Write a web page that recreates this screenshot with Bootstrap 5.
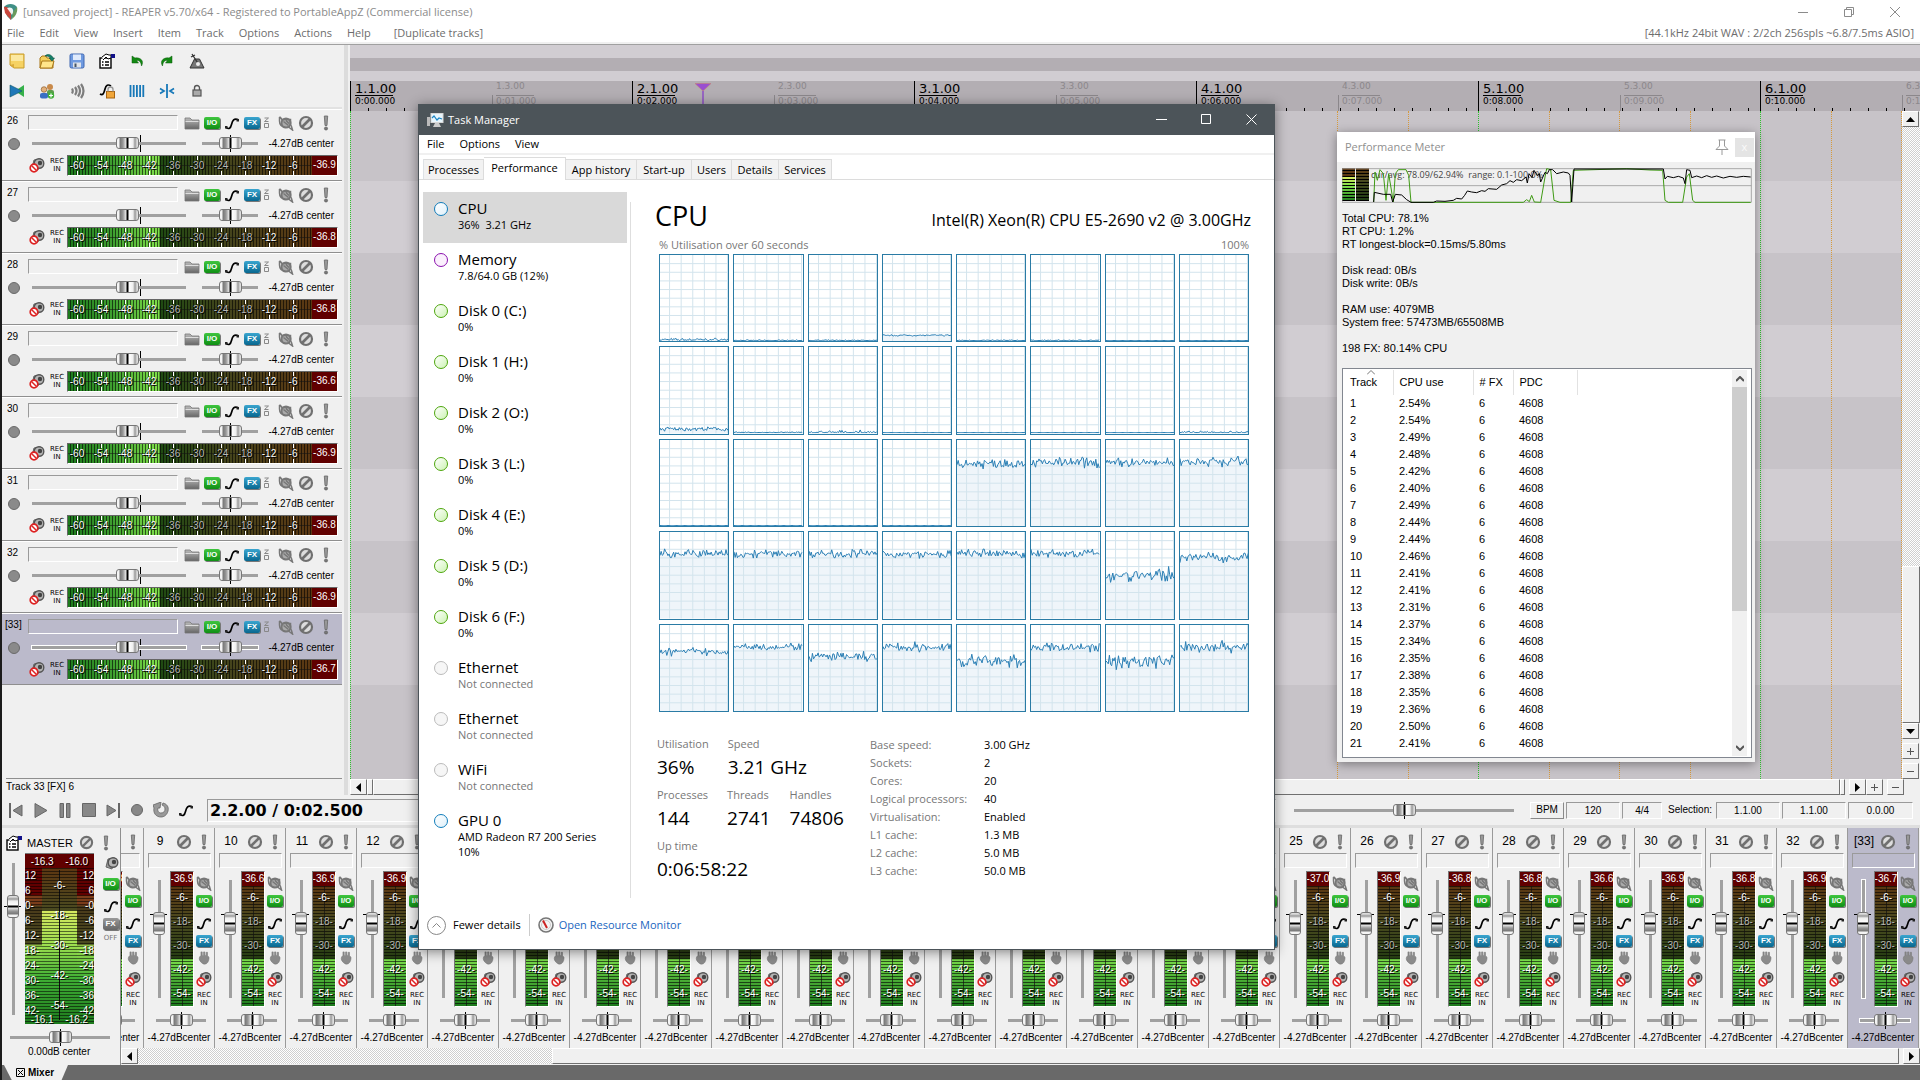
<!DOCTYPE html>
<html lang="en">
<head>
<meta charset="utf-8">
<meta name="viewport" content="width=device-width, initial-scale=1">
<title>REAPER</title>
<link href="https://cdn.jsdelivr.net/npm/bootstrap@5.3.0/dist/css/bootstrap.min.css" rel="stylesheet">
<style>
  body{background:#f0f0f0;border-left:2px solid #1b1b1b;overflow:hidden;color:#000;font:12px/16px "Open Sans","Noto Sans",sans-serif}
  button{background:none;border:0;padding:0;color:inherit;display:inline-flex;align-items:center;justify-content:center}
  input{min-width:0}
  svg{display:block;flex:none}
  .ui-arial{font-family:"Liberation Sans",Arial,sans-serif}
  .ic16{width:16px;height:16px}
  /* host window */
  .app-title{height:24px;padding-left:1px;color:#8b8b8b;font-size:11px}
  .app-title .win-btns{gap:36px;margin-right:20px}
  .app-menu{height:17px;padding:0 6px 0 5px;gap:15px;color:#6d6d6d;font-size:11px}
  .app-menu a,.tm-menu a{color:inherit;text-decoration:none}
  .app-head{background:#fff;border-bottom:1px solid #fff}
  .head-line{height:3px;border-bottom:1px solid #a0a0a0}
  /* track panel */
  .tcp{width:340px}
  .tool-row{height:30px;padding:2px 0 0 7px;gap:14px}
  .tools{height:64px;border-bottom:2px solid #e2e2e2}
  .trk{height:72px;border-bottom:1px solid #8f8f8f;border-top:1px solid #fff;font-size:10px;line-height:12px}
  .trk.sel{background:#bbbacb}
  .trk-top{height:25px;padding-left:5px}
  .trk-num{width:21px;margin-top:-4px}
  .trk.sel .trk-num{margin-left:-2px;width:23px}
  .name-box{background:transparent;border:1px solid;border-color:#9a9a9a #fff #fff #9a9a9a;height:15px;padding:0 2px;font-size:10px}
  .trk .name-box{width:150px;margin:-1px 6px 0 0}
  .trk-mid{height:17px;padding-left:6px}
  .trk-bot{height:23px;padding:3px 4px 0 27px}
  .dot{width:12px;height:12px;border-radius:50%;background:#8a8a8a;border:1px solid #6a6a6a}
  .tag{width:16px;height:12px;border-radius:2px;font:bold 8px/12px "Liberation Sans",sans-serif;color:#fff;box-shadow:1px 1px 0 #777}
  .tag-io{background:linear-gradient(#3fc53f,#0f8f14)}
  .tag-fx{background:linear-gradient(#3aa5cf,#08678f)}
  .tag-off{background:linear-gradient(#999,#666)}
  .recin{font:7px/8px "DejaVu Sans",sans-serif;text-align:center;width:16px}
  .off-lab{font:7px/8px "DejaVu Sans",sans-serif;color:#777}
  /* sliders */
  input[type=range]{-webkit-appearance:none;appearance:none;background:transparent;height:18px;margin:0;padding:0;display:block;flex:none}
  input[type=range]::-webkit-slider-runnable-track{height:3px;background:#a0a0a0}
  .sel input[type=range]::-webkit-slider-runnable-track{box-shadow:0 0 0 1px #fff}
  input[type=range]::-webkit-slider-thumb{-webkit-appearance:none;width:23px;height:12px;margin-top:-5px;border:1px solid #777;border-radius:3px;background:linear-gradient(90deg,#f4f4f4 0 2px,#777 3px,#999 6px,#e8e8e8 9px,#000 10px 11px,#fff 12px,#eee 16px,#999 18px,#ddd 20px)}
  .tick{background:linear-gradient(#000,#000) 50% 50%/1px 17px no-repeat}
  .tick-vol{background:linear-gradient(#000,#000) 108px 50%/1px 17px no-repeat}
  .fader{width:17px;background:linear-gradient(#000,#000) 50% 34px/17px 1px no-repeat}
  .fader input{transform:rotate(-90deg)}
  /* horizontal meter */
  .hmeter{width:271px;height:21px;border:1px solid;border-color:#666 #fff #fff #666;overflow:hidden;color:#fff;
    background:linear-gradient(#1118,#1118) 0 50%/244px 1px no-repeat,
      repeating-linear-gradient(90deg,transparent 0 2px,#0009 2px 3px),
      linear-gradient(90deg,#1d7a1d,#3fa030 45px,#7fe04a 91px,#1f4a12 92px,#44441c 160px,#5c3712 245px)}
  .hmeter span{width:24px;flex:none;text-align:center;text-shadow:1px 1px 0 #000,-1px 0 0 #0008;line-height:19px;background:linear-gradient(#fff,#fff) 12px 0/1px 4px no-repeat,linear-gradient(#fff,#fff) 12px 100%/1px 4px no-repeat}
  .hmeter span.dim{color:#b9b9b9}
  .hmeter b{font-weight:400;flex:none;width:25px;background:#610000;line-height:18px;text-align:center}
  .tcp-status{border-top:1px solid #8f8f8f;height:17px;margin-left:4px;font-size:10px;line-height:16px}
  .splitter{width:4px;margin:0 2px 0 2px;background:#dcdcdc}
  /* arrange */
  .band-a{height:13px;background:#d1cdd2}.band-b{height:13px;background:#b3aeb3}.band-c{height:10px;background:#d1cdd2}
  .ruler{height:30px;background:#b3aeb3;overflow:hidden;font:9px/10px "DejaVu Sans",sans-serif}
  .measure{width:282px;flex:none;background:repeating-linear-gradient(90deg,#000 0 1px,transparent 1px 18px) 0 100%/100% 3px no-repeat}
  .half{width:141px;padding-left:4px;border-left:1px solid #000;line-height:11px}
  .half.minor{border-left:1px solid transparent;color:#8b878b;background:linear-gradient(#8b878b,#8b878b) 0 100%/1px 16px no-repeat}
  .beat{height:15px;width:38px;border-bottom:1px solid;white-space:nowrap}
  .major .beat{font-size:13px;line-height:15px}
  .playhead{left:345px;top:38px;z-index:2}
  .lanes{background:#c7c3c8;overflow:hidden}
  .lane{height:72px;background:#c7c3c8}.lane:nth-child(even){background:#d1cdd2}
  .lane:first-child{height:70px}
  .gridlines{inset:0;overflow:hidden}
  .gridlines div{width:282px;flex:none;display:flex}
  .gridlines i{flex:1;border-left:1px dotted #d79a3c}
  .gridlines i:first-child{border-left-color:#2fc22f}
  .sb{background:#f0f0f0;border:1px solid;border-color:#fff #707070 #707070 #fff;width:17px;height:16px;flex:none}
  .dither{background:repeating-conic-gradient(#fff 0 25%,#cfcfcf 0 50%) 0 0/2px 2px}
  .vbar{width:18px}
  .hbar{height:16px}
  .sb-thumb{background:#f0f0f0;border:1px solid;border-color:#fff #707070 #707070 #fff}
  /* transport */
  .transport{height:33px;border-bottom:3px solid #dedede;padding:0 7px 0 5px;font-size:10px}
  .transport .tbtn{width:24px;height:24px}
  .clock{height:23px;border:1px solid;border-color:#9a9a9a #fff #fff #9a9a9a;font:bold 16px/21px "DejaVu Sans",sans-serif;padding-left:2px;margin-left:12px;width:1069px;flex:none}
  .cell{height:17px;border:1px solid;border-color:#9a9a9a #fff #fff #9a9a9a;text-align:center;background:transparent;padding:0;font-size:10px;flex:none;margin-right:2px}
  .cell.up{border-color:#fff #8a8a8a #8a8a8a #fff}
  /* mixer */
  .mixer{height:237px;font-size:10px;line-height:12px}
  .master{width:119px;border-right:1px solid #8f8f8f}
  .strips{overflow:hidden;justify-content:flex-end;height:220px;padding:0 1px 0 1px}
  .strip{width:71px;flex:none;border-right:1px solid #9a9a9a;padding-top:2px}
  .strip.sel{background:#bbbacb}
  .strip-head{height:23px;padding-left:4px;font-size:12px}
  .strip-head .num{width:24px;text-align:center;margin-top:-2px}
  .strip .name-box{width:63px;margin-left:4px}
  .strip-body{height:136px;margin-top:3px;padding-left:6px}
  .vmeter{width:24px;height:136px;margin-left:3px;border:1px solid;border-color:#777 #fff #fff #777;color:#fff;overflow:hidden;
    background:linear-gradient(#111a,#111a) 50% 100%/1px 121px no-repeat,
      repeating-linear-gradient(transparent 0 2px,#0009 2px 3px),
      linear-gradient(#5c3712 14px,#4a4a20 50px,#263d12 86px,#79dc4a 88px,#4fb238 105px,#1d7a1d)}
  .vmeter b{font-weight:400;background:#610000;height:14px;display:block;text-align:center;line-height:14px;margin:0 -2px}
  .vmeter span{height:24px;line-height:23px;display:block;text-align:center;text-shadow:1px 1px 0 #000;margin:0 -3px}
  .vmeter .dim{color:#b5b5b5}
  .iconcol{width:18px;margin-left:1px}
  .iconcol>*{flex:none}
  .g4{margin-top:4px}.g6{margin-top:6px}.g8{margin-top:8px}
  .pan-row{height:18px;margin-top:4px}
  .val-row{margin-top:3px;white-space:nowrap}
  .mmeter{width:69px;height:171px;color:#fff;overflow:hidden;border-top:1px solid #777;text-shadow:1px 1px 0 #000;
    background:repeating-linear-gradient(transparent 0 2px,#0008 2px 3px),
      linear-gradient(#111,#111) 34px 16px/1px 150px no-repeat,
      linear-gradient(#5c3712 16px,#4a4a20 56px,#d6e860 57px,#9fe050 90px,#3fae34 125px,#1d7a1d) 17px 0/35px 100% no-repeat,
      linear-gradient(#610000 41px,#7a3c1a 42px 51px,#4a3a1a 52px,#4a4a20 90px,#9fe050 92px,#3fae34 125px,#1d7a1d)}
  .mmeter .side{width:17px;flex:none;white-space:nowrap}
  .mmeter .side span{height:15px;line-height:15px;display:block}
  .mmeter .mid span{height:30px;line-height:30px;display:block;text-align:center}
  .mmeter .mid{margin-top:3px}
  .mmeter .ends{height:14px;line-height:16px}
  .mmeter .ends.top{background:#610000}
  .mmeter .ends.bottom{height:8px;line-height:8px;margin-top:-2px}
  .dock{height:15px;background:#696969;font:bold 10px/15px "Liberation Sans",sans-serif}
  .dock-tab{background:#f0f0f0;clip-path:polygon(0 0,100% 0,90% 100%,12% 100%);width:64px;padding-left:12px;gap:3px;margin-left:2px}
  /* task manager */
  .tm{left:416px;top:104px;width:857px;height:846px;background:#fff;border:1px solid #4c5459;border-top:0;box-shadow:0 2px 12px #0007;z-index:10}
  .tm-bar{height:31px;background:#4c5459;color:#fff;padding:0 17px 0 8px;font-size:11px}
  .tm-bar .win-btns{gap:34px}
  .tm-menu{height:20px;padding-left:8px;gap:15px;font-size:11px;border-bottom:2px solid #f0f0f0}
  .tm-tabs{height:25px;padding-left:4px;border-bottom:1px solid #dcdcdc;font-size:11px}
  .tm-tabs button{height:20px;background:#f2f2f2;border:1px solid #dcdcdc;border-width:1px 1px 0 0}
  .tm-tabs button.on{background:#fff;height:23px;margin-bottom:-1px;padding:0 0 3px}
  .tm-list{width:204px;margin:12px 0 0 4px}
  .tm-item{height:51px;padding:7px 0 0 11px;gap:10px;align-items:flex-start;text-align:left;width:100%;justify-content:flex-start;font-size:11px}
  .tm-item.on{background:#d9d9d9}
  .tm-item strong{display:block;font-weight:400;font-size:15px;line-height:18px}
  .tm-item small{font-size:11px;line-height:15px;display:block;white-space:nowrap}
  .tm-item.dead small{color:#777}
  .ring{width:14px;height:14px;border-radius:50%;border:1px solid;margin-top:3px;flex:none;background:linear-gradient(135deg,#fff,#dff0fa)}
  .ring.cpu{border-color:#117dbb}.ring.mem{border-color:#8b12ae;background:#fbf0fd}.ring.disk{border-color:#4da60c;background:linear-gradient(135deg,#fff,#cdf3b4)}.ring.dead{border-color:#bbb;background:#f6f6f6}
  .tm-div{width:1px;background:#dedede;margin:22px 0 3px 3px}
  .tm-main{padding:16px 25px 0 28px}
  .tm-main h1{font-size:27px;line-height:40px;margin:0 0 0 -4px;font-weight:400}
  .tm-main h2{font-size:16px;line-height:20px;margin:7px -2px 0 0;font-weight:400}
  .tm-cap{font-size:11px;color:#777;line-height:17px}
  .cores{display:grid;grid-template-columns:repeat(8,1fr);grid-auto-rows:1fr;gap:4px;height:458px;margin-top:1px}
  .core{border:1px solid #2a7ba5;min-width:0;min-height:0;background:#fff}
  .stats{margin:24px 0 0 -2px;font-size:11px;gap:22px}
  .stats .lab{color:#777;line-height:15px}
  .stats .big{font-size:19px;line-height:32px;white-space:nowrap}
  .stat-blk{height:51px;gap:19px}
  .spec th{font-weight:400;color:#777;padding:0;width:114px;line-height:18px;white-space:nowrap}
  .spec td{padding:0;line-height:18px}
  .tm-foot{height:48px;padding-left:8px;font-size:11px;gap:8px}
  .tm-foot .bar{width:1px;height:22px;background:#ccc}
  /* performance meter */
  .pm{left:1335px;top:132px;width:418px;height:630px;background:#f0f0f0;box-shadow:0 2px 10px #0006;z-index:5;font-size:11px;line-height:13px}
  .pm-title{height:30px;background:#fff;color:#8f8f8f;padding:0 1px 0 8px;font:11px/16px "Open Sans",sans-serif}
  .pm-x{width:19px;height:19px;background:#e4e4e4;color:#fafafa;font-size:11px;margin-left:6px}
  .pm-graph{margin:6px 3px 0 5px;height:35px}
  .pm-vu{width:13px;height:33px;margin-right:1px;background:repeating-linear-gradient(transparent 0 2px,#000 2px 3px),linear-gradient(#5c3712,#5c3712 8px,#d6e860 9px,#7fe04a 18px,#1d7a1d)}
  .pm-vu.off{background:repeating-linear-gradient(transparent 0 2px,#000 2px 3px),linear-gradient(#5c3712,#4a4a20 12px,#1d3d12)}
  .pm-cap{left:29px;top:2px;font:9px/10px "Open Sans",sans-serif;color:#444;white-space:pre}
  .pm-text{margin:9px 5px 0 5px;white-space:pre-line;height:156px}
  .pm-list{margin:0 3px 0 5px;height:390px;border:1px solid #828790;background:#fff;overflow:hidden;padding:1px}
  .pm-list table{font-size:11px;line-height:17px}
  .pm-list th{font-weight:400;height:25px;padding:0 0 0 6px;border-right:1px solid #e2e2e2;white-space:nowrap}
  .pm-list td{padding:0 0 0 6px;height:17px}
  .sort-mark{left:24px;top:1px}
  .pm-scroll{width:15px;background:#f0f0f0;margin-right:3px}
  .pm-scroll .knob{height:224px;background:#cdcdcd}
</style>
</head>
<body class="vh-100 d-flex flex-column position-relative">

<svg width="0" height="0" class="position-absolute" aria-hidden="true">
  <defs>
    <linearGradient id="gfold" x2="0" y2="1"><stop stop-color="#bbb"/><stop offset="1" stop-color="#666"/></linearGradient>
    <symbol id="i-folder" viewBox="0 0 16 16"><path d="M1 3h5l2 2h7v9H1z" fill="url(#gfold)" stroke="#777" stroke-width=".8"/><path d="M1.500 6.500h13" stroke="#ddd"/></symbol>
    <symbol id="i-env" viewBox="0 0 16 16"><path d="M2 12.500c3 2 4.500 1 5.500-3s2.500-6.500 6.500-5" fill="none" stroke="#000" stroke-width="1.700"/><path d="M1 11h2.500v2.500H1zM12.500 4H15v2.500h-2.500z" fill="#222"/></symbol>
    <symbol id="i-phase" viewBox="0 0 16 16"><ellipse cx="8" cy="8" rx="4.500" ry="4.500" fill="#aaa" stroke="#777" stroke-width="2"/><path d="M1.500 2c2 0 1.500 3 3.500 3.500M1.500 2v4c0 4 3 6 6 6.500M4 4.500h8.500v5l1 2 1 3.500-4-3M5.500 6.500l5 4M8 5.500l3 3" fill="none" stroke="#777" stroke-width="1.500"/></symbol>
    <symbol id="i-mute" viewBox="0 0 16 16"><circle cx="8" cy="8" r="6" fill="#ddd" stroke="#707070" stroke-width="2.200"/><path d="M4 12L12 4" stroke="#707070" stroke-width="2.600"/></symbol>
    <symbol id="i-solo" viewBox="0 0 8 16"><path d="M2.300 1h3.400L5 10.500H3z" fill="#999" stroke="#666" stroke-width=".8"/><circle cx="4" cy="13.500" r="1.600" fill="#777" stroke="#555" stroke-width=".6"/></symbol>
    <symbol id="i-spk" viewBox="0 0 16 16"><path d="M5 3l-2 8 6 2 3-11z" fill="#999" stroke="#666"/><circle cx="10" cy="6.500" r="4.800" fill="#b5b5b5" stroke="#555" stroke-width="1.400"/><circle cx="11" cy="6" r="2.200" fill="#444"/></symbol>
    <symbol id="i-recm" viewBox="0 0 16 16"><use href="#i-spk"/><circle cx="5" cy="11" r="3.800" fill="#fff" stroke="#d22" stroke-width="1.700"/><path d="M2.500 8.500l5 5" stroke="#d22" stroke-width="1.500"/></symbol>
    <symbol id="i-hand" viewBox="0 0 16 16"><path d="M3 6.500L4.500 5.500V1H6v4h1.500V1H9v4h1.500V1.500H12V6c2 0 2 2 1.500 4-1 4-3 5-5 5S3 12 2.500 9z" fill="#8a8a8a" stroke="#777" stroke-width=".6"/></symbol>
    <symbol id="i-prop" viewBox="0 0 16 16"><rect x="1" y="5" width="11" height="10" fill="#fff" stroke="#000" stroke-width="1.400"/><path d="M3 9h1.500M6 9h4M3 12h1.500M6 12h4" stroke="#000" stroke-width="1.400"/><path d="M3 4l4-3 3 1h2v3l-3 1-2-2-3 3" fill="#fff" stroke="#000"/><rect x="12" y="1" width="4" height="4" fill="#118"/></symbol>
    <symbol id="t-new" viewBox="0 0 16 16"><path d="M1 1h14v14H5l-4-3z" fill="#f6d263" stroke="#c79a2a"/><path d="M2 2h12v6H2z" fill="#fbe8a0"/><path d="M1 12l4 3v-4z" fill="#d9a93a"/></symbol>
    <symbol id="t-open" viewBox="0 0 16 16"><path d="M1 5l2-2h4l1 2h6v10H1z" fill="#f3cf5b" stroke="#a87718"/><path d="M3 8h12l-2 7H1z" fill="#ffe58a" stroke="#a87718"/><path d="M6 3c3-3 7-1 8 2h1.500L13 8l-3-3h1.500C10 3 8 3 6 3z" fill="#16806b" stroke="#0a5545" stroke-width=".6"/></symbol>
    <symbol id="t-save" viewBox="0 0 16 16"><rect x="1" y="1" width="14" height="14" rx="1.500" fill="#6f9ae0" stroke="#3f66b0"/><rect x="4" y="1.500" width="8" height="5.500" fill="#dfeafc"/><rect x="4" y="9.500" width="8" height="5" fill="#dfe3ea"/><rect x="5.500" y="10.500" width="2" height="3.500" fill="#456"/></symbol>
    <symbol id="t-undo" viewBox="0 0 16 16"><path d="M3 3v7h6.500L7.500 7.500c3-.5 4.500 1.500 5 5.500 3-5-1-9-6.500-8z" fill="#138a13" stroke="#0a5a0a" stroke-width=".5"/></symbol>
    <symbol id="t-redo" viewBox="0 0 16 16"><path d="M13 3v7H6.500L8.500 7.500c-3-.5-4.500 1.500-5 5.500-3-5 1-9 6.500-8z" fill="#138a13" stroke="#0a5a0a" stroke-width=".5"/></symbol>
    <symbol id="t-metro" viewBox="0 0 16 16"><path d="M5.500 6h5L15 15H1z" fill="#777" stroke="#333"/><path d="M3 1l7 11M2 4l4-2" stroke="#333" stroke-width="1.300"/><circle cx="9" cy="11" r="2" fill="#eee"/></symbol>
    <symbol id="t-xfade" viewBox="0 0 16 16"><path d="M15 2v12L6 8z" fill="#35b04a"/><path d="M1 2l12 6-12 6z" fill="#1f78b8" stroke="#156" stroke-width=".6"/></symbol>
    <symbol id="t-group" viewBox="0 0 16 16"><circle cx="11" cy="4" r="3" fill="#c98a4a"/><rect x="8" y="7" width="7" height="6" rx="2" fill="#5d9c4c"/><circle cx="5" cy="6.500" r="2.800" fill="#e2b07a" stroke="#7a4a1a" stroke-width=".6"/><rect x="1" y="10" width="8" height="5.500" rx="2" fill="#3a6fc4"/><circle cx="12" cy="12.500" r="3.200" fill="#42b03a"/><path d="M12 10.500v4M10 12.500h4" stroke="#fff" stroke-width="1.200"/></symbol>
    <symbol id="t-ripple" viewBox="0 0 16 16"><path d="M3 5.500q1.500 2.500 0 5M6 4q3 4 0 8M9 2.500q4 5.500 0 11M12 1q5 7 0 14" fill="none" stroke="#7d7d7d" stroke-width="2.200"/></symbol>
    <symbol id="t-lockenv" viewBox="0 0 16 16"><path d="M1 11c3 2 4-1 5-5s3-5 6-3" fill="none" stroke="#000" stroke-width="1.700"/><rect x="7.500" y="8.500" width="8" height="6.500" fill="#f0a63a" stroke="#a86410"/><path d="M9 8.500V6.500a2.500 2.500 0 015 0v2" fill="none" stroke="#999" stroke-width="1.400"/></symbol>
    <symbol id="t-grid" viewBox="0 0 16 16"><path d="M1.500 2v12M4.700 2v12M7.900 2v12M11.100 2v12M14.300 2v12" stroke="#1778b8" stroke-width="1.800"/></symbol>
    <symbol id="t-snap" viewBox="0 0 16 16"><path d="M8 1v14" stroke="#1778b8" stroke-width="1.800"/><path d="M1 5.500L5 8l-4 2.500M15 5.500L11 8l4 2.500" fill="none" stroke="#1778b8" stroke-width="1.700"/></symbol>
    <symbol id="t-lock" viewBox="0 0 16 16"><rect x="4" y="7" width="8" height="6" fill="#aaa" stroke="#555" stroke-width="1.200"/><path d="M5.500 7V5a2.500 2.500 0 015 0v2" fill="none" stroke="#555" stroke-width="1.400"/></symbol>
  </defs>
</svg>

<header>
  <div class="app-head">
    <div class="app-title d-flex align-items-center">
      <svg width="16" height="18" viewBox="0 0 16 18"><path d="M1 4c3-4 10-4 13 0l-1 5-5 8-4-4z" fill="#3f8f86"/><path d="M1 4c4-1 8 2 7 13L2 10z" fill="#c8463c"/><path d="M4 5c5-2 8 2 5 7z" fill="#fff" opacity=".9"/><path d="M14 4c1 4-1 9-5 12l1-7z" fill="#6a9a5c"/></svg>
      <span class="ms-1">[unsaved project] - REAPER v5.70/x64 - Registered to PortableAppZ (Commercial license)</span>
      <div class="win-btns d-flex ms-auto">
        <button aria-label="Minimise"><svg width="10" height="10"><path d="M0 5.500h10" stroke="#8b8b8b"/></svg></button>
        <button aria-label="Restore"><svg width="10" height="10" fill="none" stroke="#8b8b8b"><path d="M.5 2.500h7v7h-7zM2.500 2.500v-2h7v7h-2"/></svg></button>
        <button aria-label="Close"><svg width="10" height="10" stroke="#8b8b8b"><path d="M0 0l10 10M10 0L0 10"/></svg></button>
      </div>
    </div>
    <nav class="app-menu d-flex align-items-center" aria-label="Main menu">
      <a href="#">File</a><a href="#">Edit</a><a href="#">View</a><a href="#">Insert</a><a href="#">Item</a><a href="#">Track</a><a href="#">Options</a><a href="#">Actions</a><a href="#">Help</a>
      <span class="ms-2">[Duplicate tracks]</span>
      <span class="ms-auto">[44.1kHz 24bit WAV : 2/2ch 256spls ~6.8/7.5ms ASIO]</span>
    </nav>
  </div>
  <div class="head-line"></div>
</header>

<main class="d-flex flex-fill overflow-hidden">
  <section class="tcp ui-arial d-flex flex-column flex-shrink-0" aria-label="Tracks">
    <div class="tools flex-shrink-0" id="tools"></div>
    <div id="tracks"></div>
    <div class="tcp-status mt-auto">Track 33 [FX] 6</div>
  </section>
  <div class="splitter flex-shrink-0"></div>
  <section class="flex-fill d-flex flex-column overflow-hidden position-relative" aria-label="Arrange view">
    <div class="band-a"></div><div class="band-b"></div><div class="band-c"></div>
    <div class="ruler d-flex flex-shrink-0" id="ruler"></div>
    <svg class="playhead position-absolute" width="16" height="30"><path d="M0 .5h16L8 8z" fill="#9a4fd0" stroke="#c87a6a" stroke-width=".5"/><path d="M8 8v22" stroke="#7a1fd0"/></svg>
    <div class="d-flex flex-fill overflow-hidden">
      <div class="lanes flex-fill position-relative">
        <div class="lane"></div><div class="lane"></div><div class="lane"></div><div class="lane"></div><div class="lane"></div><div class="lane"></div><div class="lane"></div><div class="lane"></div>
        <div class="gridlines position-absolute d-flex" id="grid"></div>
      </div>
      <div class="vbar d-flex flex-column flex-shrink-0">
        <button class="sb" aria-label="Scroll up"><svg width="9" height="5"><path d="M0 5l4.500-5L9 5z"/></svg></button>
        <div class="dither flex-fill"></div>
        <div class="sb-thumb" style="height:157px"></div>
        <button class="sb" aria-label="Scroll down"><svg width="9" height="5"><path d="M0 0l4.500 5L9 0z"/></svg></button>
        <button class="sb mt-1" aria-label="Zoom in vertically"><svg width="7" height="7" stroke="#555"><path d="M0 3.500h7M3.500 0v7"/></svg></button>
        <button class="sb mt-1" aria-label="Zoom out vertically"><svg width="7" height="7" stroke="#555"><path d="M0 3.500h7"/></svg></button>
      </div>
    </div>
    <div class="hbar d-flex flex-shrink-0">
      <button class="sb" aria-label="Scroll left"><svg width="5" height="9"><path d="M5 0L0 4.500 5 9z"/></svg></button>
      <div class="sb-thumb" style="width:6px"></div>
      <div class="sb-thumb flex-fill"></div>
      <div class="sb-thumb me-1" style="width:5px"></div>
      <button class="sb" aria-label="Scroll right"><svg width="5" height="9"><path d="M0 0l5 4.500L0 9z"/></svg></button>
      <button class="sb" aria-label="Zoom in"><svg width="7" height="7" stroke="#555"><path d="M0 3.500h7M3.500 0v7"/></svg></button>
      <button class="sb ms-1 me-3" aria-label="Zoom out"><svg width="7" height="7" stroke="#555"><path d="M0 3.500h7"/></svg></button>
    </div>
  </section>
</main>

<section class="transport ui-arial d-flex align-items-center flex-shrink-0" aria-label="Transport">
  <button class="tbtn" style="width:18px" aria-label="Go to start"><svg width="14" height="15" fill="#888" stroke="#666"><path d="M1 0v15" stroke-width="2"/><path d="M13 2v11L4 7.500z"/></svg></button>
  <button class="tbtn ms-1" aria-label="Play"><svg width="14" height="15" fill="#888" stroke="#666"><path d="M1 .5v14l12-7z"/></svg></button>
  <button class="tbtn" aria-label="Pause"><svg width="12" height="15" fill="#888" stroke="#666"><path d="M1 .5h3.500v14H1zM7.500.5H11v14H7.500z"/></svg></button>
  <button class="tbtn" aria-label="Stop"><svg width="14" height="14" fill="#888" stroke="#666"><path d="M.5.5h13v13H.5z"/></svg></button>
  <button class="tbtn" aria-label="Go to end"><svg width="14" height="15" fill="#888" stroke="#666"><path d="M13 0v15" stroke-width="2"/><path d="M1 2v11l9-5.500z"/></svg></button>
  <button class="tbtn" aria-label="Record"><svg width="12" height="12"><circle cx="6" cy="6" r="5.500" fill="#888" stroke="#666"/></svg></button>
  <button class="tbtn" aria-label="Repeat"><svg width="16" height="16"><path d="M0 3L8 0 7 6l-2 0c-1 3 1 5 3 5 3 0 4-2 4-4s-1-3-3-4l1-2c4 1 6 4 5 8-1 4-4 6-7 6-5 0-8-4-7-9z" fill="#999" stroke="#666" stroke-width=".8"/></svg></button>
  <button class="tbtn ms-1" style="width:18px" aria-label="Automation"><svg class="ic16"><use href="#i-env"/></svg></button>
  <div class="clock">2.2.00 / 0:02.500</div>
  <div class="tick ms-auto me-3"><input type="range" aria-label="Play rate" value="50" style="width:220px"></div>
  <button class="cell up" style="width:34px">BPM</button>
  <input class="cell" style="width:54px" aria-label="Tempo" value="120">
  <input class="cell" style="width:40px" aria-label="Time signature" value="4/4">
  <label for="selStart" class="mx-1">Selection:</label>
  <input class="cell" id="selStart" style="width:64px" value="1.1.00">
  <input class="cell" style="width:64px" aria-label="Selection end" value="1.1.00">
  <input class="cell me-0" style="width:65px" aria-label="Selection length" value="0.0.00">
</section>

<section class="mixer ui-arial d-flex flex-shrink-0" aria-label="Mixer">
  <div class="master flex-shrink-0">
    <div class="strip-head d-flex align-items-center pt-1" style="height:25px;font-size:11px">
      <button aria-label="Mixer settings"><svg class="ic16"><use href="#i-prop"/></svg></button>
      <span style="margin:0 6px 0 5px">MASTER</span>
      <button aria-label="Mute master"><svg width="15" height="15"><use href="#i-mute"/></svg></button>
      <button class="ms-2" aria-label="Solo master"><svg width="8" height="16"><use href="#i-solo"/></svg></button>
    </div>
    <div class="d-flex">
      <div class="fader d-flex align-items-center justify-content-center" style="height:171px;margin:0 4px 0 2px;background-position:50% 53px"><input type="range" aria-label="Master volume" value="75" style="width:152px"></div>
      <div class="mmeter">
        <div class="ends top d-flex justify-content-around"><span>-16.3</span><span>-16.0</span></div>
        <div class="d-flex justify-content-between" style="height:150px">
          <div class="side"><span>12</span><span>6</span><span>0-</span><span>6-</span><span>12-</span><span>18-</span><span>24-</span><span>30-</span><span>36-</span><span>42-</span></div>
          <div class="mid"><span>-6-</span><span>-18-</span><span>-30-</span><span>-42-</span><span>-54-</span></div>
          <div class="side text-end"><span>12</span><span>6</span><span>-0</span><span>-6</span><span>-12</span><span>-18</span><span>-24</span><span>-30</span><span>-36</span><span>-42</span></div>
        </div>
        <div class="ends bottom d-flex justify-content-around"><span>-16.1</span><span>-16.2</span></div>
      </div>
      <div class="iconcol d-flex flex-column align-items-center ms-auto" style="padding:3px 1px 0 0">
        <button aria-label="Master mono"><svg class="ic16"><use href="#i-spk"/></svg></button>
        <button class="tag tag-io g6">I/O</button>
        <button class="g8" aria-label="Master envelopes"><svg class="ic16"><use href="#i-env"/></svg></button>
        <button class="tag tag-off g4">FX</button>
        <span class="off-lab g4">OFF</span>
      </div>
    </div>
    <div class="pan-row tick" style="width:100px;margin-left:8px"><input type="range" class="w-100" aria-label="Master pan" value="50"></div>
    <div style="margin-left:26px">0.00dB center</div>
  </div>
  <div class="flex-fill overflow-hidden d-flex flex-column">
    <div class="strips d-flex" id="strips"></div>
    <div class="hbar d-flex">
      <button class="sb" aria-label="Scroll mixer left"><svg width="5" height="9"><path d="M5 0L0 4.500 5 9z"/></svg></button>
      <div class="dither" style="width:23%"></div>
      <div class="sb-thumb flex-fill"></div>
      <button class="sb ms-1" aria-label="Scroll mixer right"><svg width="5" height="9"><path d="M0 0l5 4.500L0 9z"/></svg></button>
    </div>
  </div>
</section>
<footer class="dock flex-shrink-0 d-flex">
  <div class="dock-tab d-flex align-items-center"><svg width="9" height="9" fill="none" stroke="#000"><path d="M.5.5h8v8h-8zM2 2l5 5M7 2L2 7"/></svg><span>Mixer</span></div>
</footer>

<section class="pm ui-arial position-absolute d-flex flex-column" aria-label="Performance Meter">
  <div class="pm-title d-flex align-items-center flex-shrink-0">
    <span class="me-auto">Performance Meter</span>
    <button aria-label="Pin"><svg width="14" height="16" fill="#fff" stroke="#999"><path d="M3.500 1h7M4.500 1v6L1 10.500h12L9.500 7V1M7 10.500V16"/></svg></button>
    <button class="pm-x" aria-label="Close">x</button>
  </div>
  <div class="pm-graph d-flex position-relative flex-shrink-0">
    <div class="pm-vu"></div><div class="pm-vu off"></div>
    <div class="pm-cap position-absolute">cur/avg: 78.09/62.94%  range: 0.1-100.0%</div>
    <svg class="position-absolute top-0 start-0 w-100 h-100" viewBox="36 143 1230 105" preserveAspectRatio="none" fill="none">
      <path d="M36 145H1264V246H36zM120 196H1264" stroke="#999" stroke-width="2.500"/>
      <path stroke="#3f9a14" stroke-width="3" d="M131 245L135 155 142 180 150 148 160 160 168 240 176 160 190 245 196 160 205 148 228 148 236 165 243 246H580L590 238 598 244 605 225 613 245 632 246 645 170 650 145 662 148 672 240 690 246H722L730 150 890 145 960 149 998 150 1005 240 1015 246H1058L1070 170 1078 160 1088 240 1095 246H1262"/>
      <path stroke="#000" stroke-width="3" d="M131 245L133 216 160 222 182 222 188 245 196 222 215 224 230 238 243 246H310L320 242 345 243 370 240 380 234 395 236 404 225 412 212 425 215 440 217 455 211 465 213 475 205 500 207 515 194 530 190 540 181 550 186 560 178 575 181 588 170 592 188 597 160 606 172 612 150 622 165 628 160 632 185 645 156 652 160 658 148 668 148 680 160 700 155 715 158 720 165 725 245 732 146H1000L1005 176 1012 168 1030 172 1045 168 1060 173 1065 190 1070 148 1080 150 1085 172 1100 167 1115 172 1130 166 1145 171 1160 167 1180 173 1200 168 1220 171 1240 168 1262 170"/>
    </svg>
  </div>
  <div class="pm-text flex-shrink-0">Total CPU: 78.1%
RT CPU: 1.2%
RT longest-block=0.15ms/5.80ms

Disk read: 0B/s
Disk write: 0B/s

RAM use: 4079MB
System free: 57473MB/65508MB

198 FX: 80.14% CPU</div>
  <div class="pm-list d-flex position-relative">
    <svg class="sort-mark position-absolute" width="8" height="5" fill="none" stroke="#777"><path d="M0 4.500L4 .5l4 4"/></svg>
    <div class="me-auto overflow-hidden">
      <table>
        <thead><tr><th style="width:49px">Track</th><th style="width:80px">CPU use</th><th style="width:40px"># FX</th><th style="width:64px">PDC</th></tr></thead>
        <tbody id="pmrows"></tbody>
      </table>
    </div>
    <div class="pm-scroll d-flex flex-column">
      <button style="height:17px" aria-label="Scroll list up"><svg width="8" height="6" fill="none" stroke="#555" stroke-width="2"><path d="M0 5l4-4 4 4"/></svg></button>
      <div class="knob"></div>
      <button class="mt-auto" style="height:17px" aria-label="Scroll list down"><svg width="8" height="6" fill="none" stroke="#555" stroke-width="2"><path d="M0 1l4 4 4-4"/></svg></button>
    </div>
  </div>
</section>

<section class="tm position-absolute d-flex flex-column" aria-label="Task Manager">
  <div class="tm-bar d-flex align-items-center flex-shrink-0">
    <svg width="17" height="14" viewBox="0 0 17 14"><rect x="0" y="4" width="3" height="9" fill="#bbb"/><rect x="4" y=".5" width="12" height="9" fill="#e8f6fd" stroke="#d8d8d8"/><path d="M5 5l2-2 3 4 2-2 3 1" fill="none" stroke="#1b84c4" stroke-width="1.200"/><path d="M8 10h4l2 4H6z" fill="#ccc"/></svg>
    <span class="ms-1 me-auto">Task Manager</span>
    <div class="win-btns d-flex">
      <button aria-label="Minimise"><svg width="11" height="11" stroke="#fff"><path d="M0 5.500h11"/></svg></button>
      <button aria-label="Maximise"><svg width="11" height="11" fill="none" stroke="#fff"><path d="M.5.5h9v9h-9z"/></svg></button>
      <button aria-label="Close"><svg width="11" height="11" stroke="#fff"><path d="M.5.5l10 10M10.500.5l-10 10"/></svg></button>
    </div>
  </div>
  <nav class="tm-menu d-flex align-items-center flex-shrink-0" aria-label="Task Manager menu"><a href="#">File</a><a href="#">Options</a><a href="#">View</a></nav>
  <div class="tm-tabs d-flex align-items-end flex-shrink-0">
    <button style="width:61px" class="border-start">Processes</button><button style="width:82px" class="on">Performance</button><button style="width:71px">App history</button><button style="width:55px">Start-up</button><button style="width:40px">Users</button><button style="width:47px">Details</button><button style="width:53px">Services</button>
  </div>
  <div class="d-flex flex-fill overflow-hidden">
    <div class="tm-list flex-shrink-0" id="tmlist"></div>
    <div class="tm-div flex-shrink-0"></div>
    <div class="tm-main flex-fill">
      <div class="d-flex justify-content-between align-items-center"><h1>CPU</h1><h2>Intel(R) Xeon(R) CPU E5-2690 v2 @ 3.00GHz</h2></div>
      <div class="tm-cap d-flex justify-content-between"><span>% Utilisation over 60 seconds</span><span>100%</span></div>
      <div class="cores" id="cores"></div>
      <div class="stats d-flex">
        <div style="width:191px">
          <div class="stat-blk d-flex"><div><div class="lab">Utilisation</div><div class="big">36%</div></div><div><div class="lab">Speed</div><div class="big">3.21 GHz</div></div></div>
          <div class="stat-blk d-flex"><div><div class="lab">Processes</div><div class="big">144</div></div><div><div class="lab">Threads</div><div class="big">2741</div></div><div><div class="lab">Handles</div><div class="big">74806</div></div></div>
          <div class="stat-blk"><div class="lab">Up time</div><div class="big">0:06:58:22</div></div>
        </div>
        <table class="spec align-self-start"><tbody>
          <tr><th scope="row">Base speed:</th><td>3.00 GHz</td></tr><tr><th scope="row">Sockets:</th><td>2</td></tr><tr><th scope="row">Cores:</th><td>20</td></tr><tr><th scope="row">Logical processors:</th><td>40</td></tr><tr><th scope="row">Virtualisation:</th><td>Enabled</td></tr><tr><th scope="row">L1 cache:</th><td>1.3 MB</td></tr><tr><th scope="row">L2 cache:</th><td>5.0 MB</td></tr><tr><th scope="row">L3 cache:</th><td>50.0 MB</td></tr>
        </tbody></table>
      </div>
    </div>
  </div>
  <div class="tm-foot d-flex align-items-center flex-shrink-0">
    <button style="gap:7px"><svg width="19" height="19" fill="none" stroke="#888"><circle cx="9.500" cy="9.500" r="9"/><path d="M5.500 11.500l4-4 4 4"/></svg>Fewer details</button>
    <span class="bar"></span>
    <a href="#" class="d-flex align-items-center text-decoration-none" style="color:#1a66c0;gap:5px"><svg width="16" height="16"><circle cx="8" cy="8" r="7" fill="#f4f4f4" stroke="#777" stroke-width="1.600"/><circle cx="8" cy="8" r="4.500" fill="none" stroke="#ccc"/><path d="M5 3.500L9 11" stroke="#c22" stroke-width="2"/></svg>Open Resource Monitor</a>
  </div>
</section>

<script src="https://cdn.jsdelivr.net/npm/bootstrap@5.3.0/dist/js/bootstrap.bundle.min.js"></script>
<script>
const $ = id => document.getElementById(id);
const icon = (id, w = 16, h = 16) => `<svg width="${w}" height="${h}"><use href="#${id}"/></svg>`;
const btn = (label, id, w, h, cls = '') => `<button class="${cls}" aria-label="${label}">${icon(id, w, h)}</button>`;

// toolbars
const toolRows = [['new','open','save','prop','undo','redo','metro'], ['xfade','group','ripple','lockenv','grid','snap','lock']];
$('tools').innerHTML = toolRows.map(r => `<div class="tool-row d-flex align-items-center">${r.map(n => btn(n, n === 'prop' ? 'i-prop' : 't-' + n)).join('')}</div>`).join('');

// track panel
const peaks = {9:-36.9,10:-36.6,11:-36.9,12:-36.9,25:'-37.0',26:-36.9,27:-36.8,28:-36.8,29:-36.6,30:-36.9,31:-36.8,32:-36.9,33:-36.7};
const label = n => n === 33 ? '[33]' : n;
let html = '';
for (let n = 26; n <= 33; n++) {
  const marks = [-60,-54,-48,-42,-36,-30,-24,-18,-12,-6].map((m, i) => `<span class="${i > 3 && i < 8 ? 'dim' : ''}">${m}</span>`).join('');
  html += `<div class="trk${n === 33 ? ' sel' : ''}">
    <div class="trk-top d-flex align-items-center"><span class="trk-num">${label(n)}</span>
      <input class="name-box" type="text" aria-label="Name of track ${n}">
      ${btn('Folder', 'i-folder')}<button class="tag tag-io ms-1 me-1">I/O</button>${btn('Envelopes', 'i-env')}<button class="tag tag-fx ms-1 me-1">FX</button>
      <svg width="5" height="12" style="margin-right:9px" fill="none" stroke="#888"><path d="M.5 1h4L.5 4.500h4M.5 6.500h4v4h-4z"/></svg>
      ${btn('Phase', 'i-phase')}${btn('Mute', 'i-mute', 16, 16, 'ms-1')}${btn('Solo', 'i-solo', 8, 16, 'ms-2')}</div>
    <div class="trk-mid d-flex align-items-center"><button class="dot me-1" aria-label="Record arm"></button>
      <div class="tick-vol" style="margin:0 16px 0 8px"><input type="range" aria-label="Volume of track ${n}" value="64" style="width:154px"></div>
      <div class="tick"><input type="range" aria-label="Pan of track ${n}" value="50" style="width:56px"></div>
      <span class="ms-auto me-1 pe-1">-4.27dB center</span></div>
    <div class="trk-bot d-flex align-items-center">${btn('Monitoring', 'i-recm')}<span class="recin ms-1 me-auto">REC IN</span>
      <div class="hmeter d-flex justify-content-between"><div class="d-flex" style="margin-left:-3px">${marks}</div><b>${peaks[n]}</b></div></div>
  </div>`;
}
$('tracks').innerHTML = html;

// ruler and grid
html = ''; let lines = '';
for (let m = 0; m < 6; m++) {
  html += `<div class="measure d-flex"><div class="half major"><div class="beat">${m + 1}.1.00</div>0:${String(m * 2).padStart(2, '0')}.000</div>
    <div class="half minor"><div class="beat">${m + 1}.3.00</div>0:${String(m * 2 + 1).padStart(2, '0')}.000</div></div>`;
  lines += '<div><i></i><i></i><i></i><i></i></div>';
}
$('ruler').innerHTML = html; $('grid').innerHTML = lines;

// mixer strips
html = '';
for (let n = 8; n <= 33; n++) {
  html += `<div class="strip${n === 33 ? ' sel' : ''}">
    <div class="strip-head d-flex align-items-center"><span class="num">${label(n)}</span>${btn('Mute', 'i-mute', 16, 16, 'ms-1')}${btn('Solo', 'i-solo', 8, 16, 'ms-2')}</div>
    <input class="name-box d-block" type="text" aria-label="Mixer name of track ${n}">
    <div class="strip-body d-flex"><div class="fader d-flex align-items-center justify-content-center" style="height:118px;margin-top:9px"><input type="range" aria-label="Fader of track ${n}" value="66" style="width:118px"></div>
      <div class="vmeter"><b>${peaks[n] || -36.8}</b><span>-6-</span><span class="dim">-18-</span><span class="dim">-30-</span><span>-42-</span><span>-54-</span></div>
      <div class="iconcol d-flex flex-column align-items-center">${btn('Phase', 'i-phase', 16, 16, 'mt-1')}
        <button class="tag tag-io g4">I/O</button>${btn('Envelopes', 'i-env', 16, 16, 'g8')}<button class="tag tag-fx g4">FX</button>${btn('Record', 'i-hand', 14, 14, 'g4')}
        ${btn('Monitoring', 'i-recm', 16, 16, 'g6')}<span class="recin g4">REC IN</span></div></div>
    <div class="pan-row tick" style="width:50px;margin-left:12px"><input type="range" class="w-100" aria-label="Mixer pan of track ${n}" value="50"></div>
    <div class="val-row text-center">-4.27dBcenter</div>
  </div>`;
}
$('strips').innerHTML = html;

// plug-in load list
const load = ['2.54','2.54','2.49','2.48','2.42','2.40','2.49','2.44','2.44','2.46','2.41','2.41','2.31','2.37','2.34','2.35','2.38','2.35','2.36','2.50','2.41','2.38'];
$('pmrows').innerHTML = load.map((v, i) => `<tr><td>${i + 1}</td><td>${v}%</td><td>6</td><td>4608</td></tr>`).join('');

// resource list
const res = [['cpu','CPU','36%&nbsp; 3.21 GHz'],['mem','Memory','7.8/64.0 GB (12%)'],
  ...['0 (C:)','1 (H:)','2 (O:)','3 (L:)','4 (E:)','5 (D:)','6 (F:)'].map(d => ['disk','Disk ' + d,'0%']),
  ['dead','Ethernet','Not connected'],['dead','Ethernet','Not connected'],['dead','WiFi','Not connected'],['cpu','GPU 0','AMD Radeon R7 200 Series<br>10%']];
$('tmlist').innerHTML = res.map(([k, t, s], i) => `<button class="tm-item ${k === 'dead' ? 'dead' : ''} ${i ? '' : 'on'}"><span class="ring ${k}"></span><span><strong>${t}</strong><small>${s}</small></span></button>`).join('');

// logical processor graphs: [level %, noise %]
const cores = [[2,2],[1,1],[1,1],[7,1],[1,1],[1,1],[0,0],[0,1],
  [5,3],[1,1],[1,3],[0,0],[0,0],[0,0],[0,0],[1,2],
  [0,0],[0,0],[0,0],[0,1],[73,7],[74,7],[74,6],[75,7],
  [75,6],[75,6],[75,6],[74,5],[75,6],[75,6],[50,11],[71,7],
  [69,6],[75,5],[63,7],[74,7],[58,9],[74,6],[58,10],[75,8]];
let seed = 7;
const rnd = () => (seed = (seed * 16807) % 2147483647) / 2147483647;
$('cores').innerHTML = cores.map(([lv, nz]) => {
  let grid = '', pts = '';
  for (let i = 1; i < 10; i++) grid += `M0 ${i * 10}H100`;
  for (let x = 14; x < 100; x += 17) grid += `M${x} 0V100`;
  for (let i = 0; i <= 60; i++) pts += `${(i * 100 / 60).toFixed(1)} ${Math.min(99, 100 - lv - (rnd() + rnd() - 1) * nz).toFixed(1)} `;
  return `<div class="core"><svg width="100%" height="100%" viewBox="0 0 100 100" preserveAspectRatio="none">
    <path d="M0 100L${pts}L100 100z" fill="#eff5fa"/><path d="${grid}" stroke="#d3e4ed" fill="none" vector-effect="non-scaling-stroke"/>
    <path d="M${pts}" fill="none" stroke="#2a7fb5" vector-effect="non-scaling-stroke"/></svg></div>`;
}).join('');
</script>
</body>
</html>
